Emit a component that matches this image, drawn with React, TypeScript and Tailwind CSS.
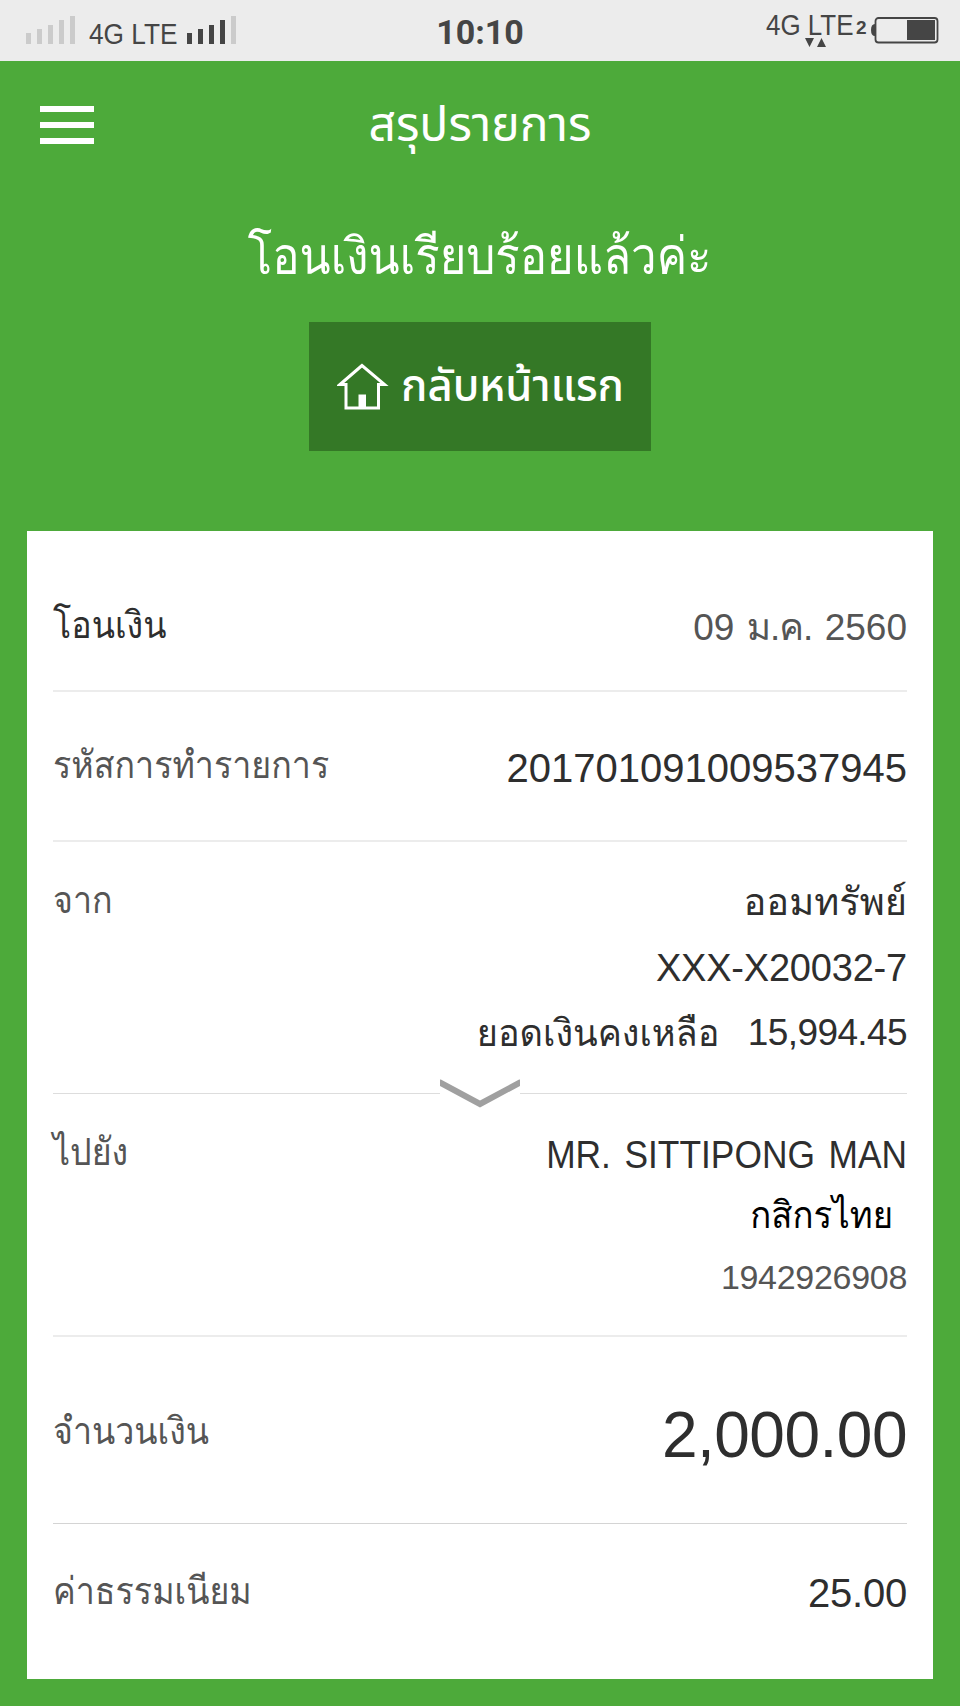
const base = "font-['Liberation_Sans','Loma','Noto_Sans_Thai_Looped','Waree','Garuda',sans-serif]";

function Signal({ on }: { on: number }) {
  return (
    <div className="flex items-end gap-[6px]">
      {["h-[11px]", "h-[15px]", "h-[19px]", "h-[24px]", "h-[28px]"].map((h, i) => (
        <span key={h} className={`w-[5px] ${h} ${i < on ? "bg-[#454545]" : "bg-[#cbcbcb]"}`} />
      ))}
    </div>
  );
}

function StatusBar() {
  return (
    <div className="flex h-[61px] items-start bg-[#ececec] text-[#454545]">
      <div className="flex w-[320px] items-end pt-[16px] pl-[26px]">
        <Signal on={0} />
        <span className="ml-[14px] h-[28px] w-[98px] origin-left scale-x-[0.89] whitespace-nowrap text-[29.5px] leading-[36px]">4G LTE</span>
        <Signal on={4} />
      </div>
      <div className="w-[320px] pt-[12px] text-center font-['Roboto',sans-serif] text-[34px] leading-[40px] font-bold">10:10</div>
      <div className="flex w-[320px] pt-[10px] pl-[126px]">
        <div className="relative w-[90px]">
          <div className="origin-left scale-x-[0.88] whitespace-nowrap text-[29.5px] leading-[30px]">4G LTE</div>
          <svg className="absolute top-[28px] left-[39px]" width="22" height="9" fill="#454545">
            <path d="M0 0h9L4.500 9zM12 9h9L16.500 0z" />
          </svg>
        </div>
        <span className="mt-[6px] w-[14px] text-[19px] leading-[24px] font-bold">2</span>
        <svg width="69" height="28" viewBox="0 0 69 28" className="mt-[6px]">
          <path d="M5 8Q1 8 1 14t4 6z" fill="#454545" />
          <rect x="5.500" y="2" width="62" height="24.500" rx="3" fill="none" stroke="#454545" strokeWidth="1.800" />
          <rect x="37" y="4" width="28" height="20" fill="#454545" />
        </svg>
      </div>
    </div>
  );
}

function Row({ label, labelClass = "text-[#555555]", rowClass, children }: any) {
  return (
    <div className={`flex justify-between whitespace-nowrap ${rowClass}`}>
      <div className={`origin-left scale-x-[0.895] text-[38px] leading-[49px] ${labelClass}`}>{label}</div>
      <div className="flex flex-col items-end text-[#2e2e2e]">{children}</div>
    </div>
  );
}

export default function App() {
  return (
    <div className={`h-[1706px] w-[960px] overflow-hidden bg-[#4daa3a] ${base}`}>
      <StatusBar />

      <header className="flex h-[129px] items-start px-[40px] text-white">
        <div className="mt-[45px] flex w-[54px] flex-col gap-[10px]">
          <span className="h-[6px] bg-white" />
          <span className="h-[6px] bg-white" />
          <span className="h-[6px] bg-white" />
        </div>
        <h1 className="mt-[34px] flex-1 pr-[54px] text-center font-['Noto_Sans_Thai',sans-serif] text-[48px] leading-[64px]">สรุปรายการ</h1>
      </header>

      <div className="flex h-[341px] flex-col items-center text-white">
        <p className="mt-[32px] scale-x-[0.893] text-[51px] leading-[70px]">โอนเงินเรียบร้อยแล้วค่ะ</p>
        <button className="mt-[30px] flex h-[129px] w-[342px] items-center bg-[#347826] pl-[28px] font-['Noto_Sans_Thai',sans-serif] text-[44px] font-medium">
          <svg width="52" height="49" viewBox="0 0 52 49" fill="none" stroke="white" strokeWidth="3">
            <path d="M25 3.500L3 22.500h6V46h32.500V22.500h6z" />
            <path d="M21.500 32.500h7.500V45h-7.500z" fill="white" stroke="none" />
          </svg>
          <span className="ml-[12px] origin-left scale-x-[0.99] pt-[3px]">กลับหน้าแรก</span>
        </button>
      </div>

      <main className="mx-[27px] h-[1148px] bg-white px-[26px]">
        <Row label="โอนเงิน" labelClass="text-[#2e2e2e]" rowClass="h-[161px] pt-[70px] border-b-2 border-[#ececec]">
          <span className="text-[37px] leading-[53px] text-[#555555] [word-spacing:2px]">
            09 <span className="tracking-[-1px]">ม.ค.</span> 2560
          </span>
        </Row>
        <Row label="รหัสการทำรายการ" rowClass="h-[150px] pt-[49px] border-b-2 border-[#ececec]">
          <span className="text-[40px] leading-[55px]">201701091009537945</span>
        </Row>
        <Row label="จาก" rowClass="h-[251px] pt-[34px]">
          <span className="text-[38px] leading-[53px]">ออมทรัพย์</span>
          <span className="mt-[4px] text-[38px] leading-[70px] tracking-[-0.2px]">XXX-X20032-7</span>
          <span className="flex gap-[28px] text-[37px] leading-[60px]">
            <span className="origin-right scale-x-95 text-[38px]">ยอดเงินคงเหลือ</span>
            <span className="tracking-[-0.6px]">15,994.45</span>
          </span>
        </Row>
        <div className="relative h-px bg-[#dddddd]">
          <svg className="absolute top-[-14px] left-[387px] bg-white" width="80" height="30" fill="none" stroke="#a0a0a0" strokeWidth="6">
            <path d="M-1 3L40 25L81 3" />
          </svg>
        </div>
        <Row label="ไปยัง" rowClass="h-[243px] pt-[34px] border-b-2 border-[#ececec]">
          <span className="origin-right scale-x-[0.93] text-[38px] leading-[54px] [word-spacing:4px]">MR. SITTIPONG MAN</span>
          <span className="mr-[14px] origin-right scale-x-[0.915] text-[38px] leading-[67px] text-black">กสิกรไทย</span>
          <span className="text-[34px] leading-[57px] tracking-[-0.3px] text-[#555555]">1942926908</span>
        </Row>
        <Row label="จำนวนเงิน" rowClass="h-[187px] pt-[70px] border-b border-[#d4d4d4]">
          <span className="text-[64px] leading-[56px] tracking-[-0.5px]">2,000.00</span>
        </Row>
        <Row label="ค่าธรรมเนียม" rowClass="pt-[43px]">
          <span className="text-[40px] leading-[52px] tracking-[-0.2px]">25.00</span>
        </Row>
      </main>
    </div>
  );
}
